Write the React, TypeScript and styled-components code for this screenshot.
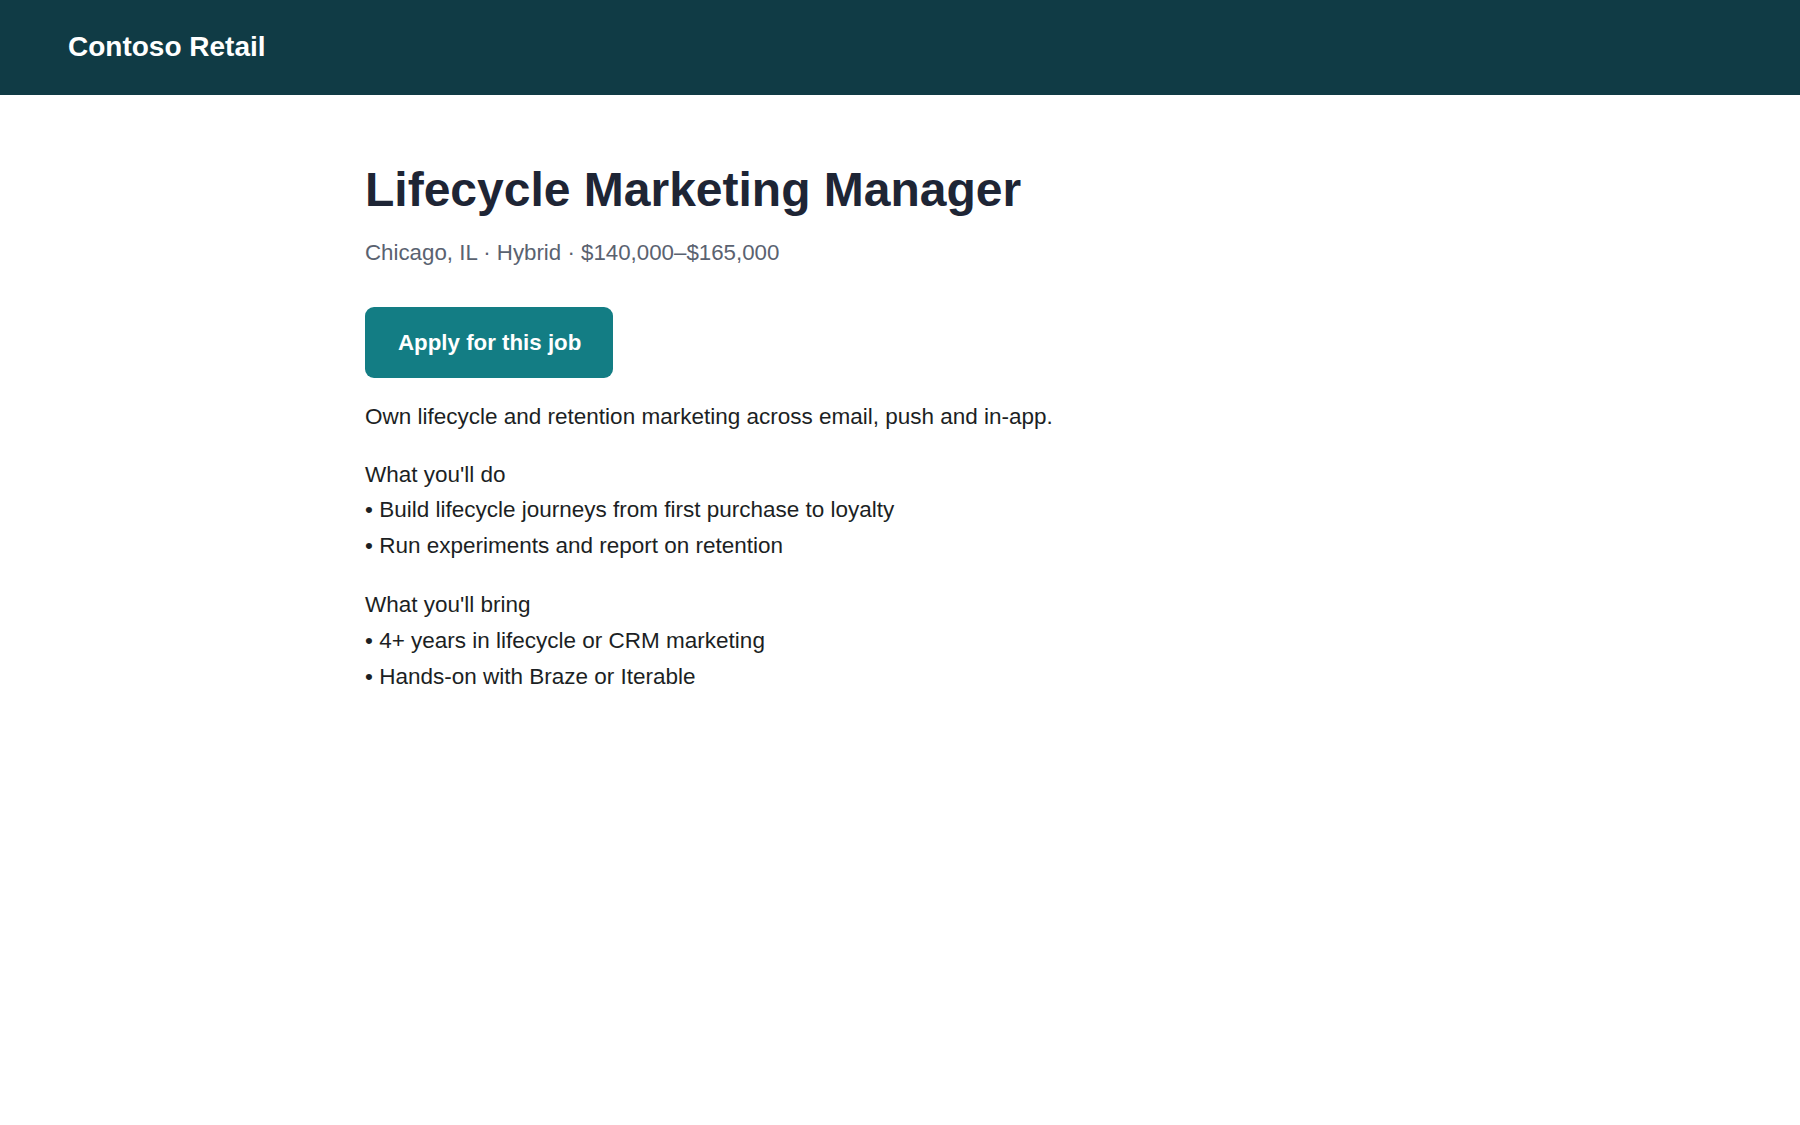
import * as React from 'react';
import styled, { createGlobalStyle } from 'styled-components';

const GlobalStyle = createGlobalStyle`
  html, body {
    margin: 0;
    padding: 0;
    background: #ffffff;
    font-family: "Liberation Sans", Arial, Helvetica, sans-serif;
  }
`;

const Header = styled.header`
  height: 95px;
  background-color: #103b45;
  display: flex;
  align-items: center;
  padding: 0 68px;
`;

const Brand = styled.div`
  color: #ffffff;
  font-size: 28px;
  font-weight: 700;
  line-height: 1;
  margin-top: -2px;
`;

const Main = styled.main`
  width: 1070px;
  margin: 0 auto;
  padding-top: 66px;
  box-sizing: border-box;
`;

const Title = styled.h1`
  margin: 0;
  font-size: 48px;
  line-height: 58px;
  font-weight: 700;
  color: #1e2535;
`;

const Meta = styled.div`
  margin-top: 17px;
  font-size: 22.3px;
  line-height: 33px;
  color: #5a6270;
`;

const ApplyButton = styled.button`
  margin-top: 38px;
  height: 71px;
  padding: 0 32px 0 33px;
  border: none;
  border-radius: 9px;
  background-color: #137d84;
  color: #ffffff;
  font-family: inherit;
  font-size: 22.3px;
  font-weight: 700;
  cursor: pointer;
`;

const Body = styled.div`
  margin-top: 21px;
  color: #1c1f24;
  font-size: 22.5px;
  line-height: 35.6px;
`;

const Paragraph = styled.p`
  margin: 0 0 22px;
`;

const Section = styled.div`
  margin-bottom: 24px;
`;

const Line = styled.div``;

const sections = [
  {
    title: "What you'll do",
    items: [
      'Build lifecycle journeys from first purchase to loyalty',
      'Run experiments and report on retention',
    ],
  },
  {
    title: "What you'll bring",
    items: ['4+ years in lifecycle or CRM marketing', 'Hands-on with Braze or Iterable'],
  },
];

export default function App() {
  return (
    <>
      <GlobalStyle />
      <Header>
        <Brand>Contoso Retail</Brand>
      </Header>
      <Main>
        <Title>Lifecycle Marketing Manager</Title>
        <Meta>Chicago, IL · Hybrid · $140,000–$165,000</Meta>
        <ApplyButton>Apply for this job</ApplyButton>
        <Body>
          <Paragraph>Own lifecycle and retention marketing across email, push and in-app.</Paragraph>
          {sections.map(s => (
            <Section key={s.title}>
              <Line>{s.title}</Line>
              {s.items.map(i => (
                <Line key={i}>• {i}</Line>
              ))}
            </Section>
          ))}
        </Body>
      </Main>
    </>
  );
}
